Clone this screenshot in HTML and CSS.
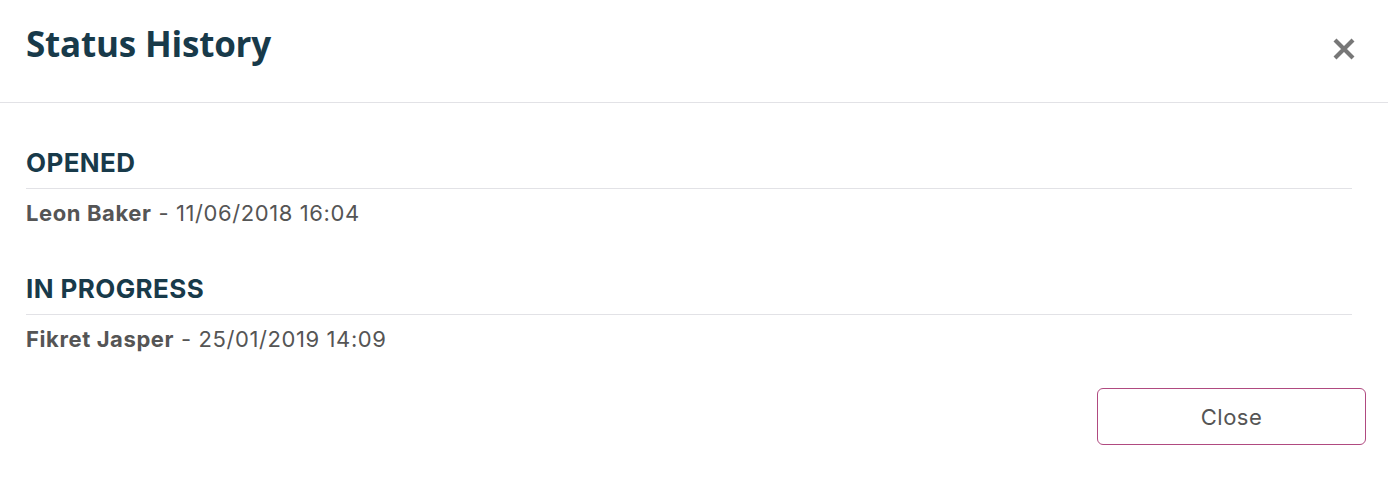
FILE: index.html
```html
<!DOCTYPE html>
<html lang="en">
<head>
<meta charset="utf-8">
<title>Status History</title>
<link rel="stylesheet" href="styles.css">
</head>
<body>
<div class="modal">
  <header class="modal-header">
    <h1 class="modal-title">Status History</h1>
    <button class="icon-close" aria-label="Close">
      <svg width="22" height="22" viewBox="0 0 22 22"><path d="M2 2 L20 20 M20 2 L2 20" stroke="#777777" stroke-width="4.2" stroke-linecap="butt"/></svg>
    </button>
  </header>
  <div class="modal-body">
    <section class="status">
      <h2 class="status-name">OPENED</h2>
      <p class="status-meta"><strong>Leon Baker</strong> - 11/06/2018 16:04</p>
    </section>
    <section class="status">
      <h2 class="status-name">IN PROGRESS</h2>
      <p class="status-meta"><strong>Fikret Jasper</strong> - 25/01/2019 14:09</p>
    </section>
  </div>
  <footer class="modal-footer">
    <button class="btn-close">Close</button>
  </footer>
</div>
</body>
</html>
```
FILE: styles.css
```css
html, body {
  margin: 0;
  padding: 0;
  background: #ffffff;
}
body {
  font-family: Inter, "Liberation Sans", sans-serif;
  width: 1388px;
  height: 492px;
  overflow: hidden;
}
.modal {
  display: flex;
  flex-direction: column;
}
.modal-header {
  height: 103px;
  box-sizing: border-box;
  border-bottom: 1px solid #e2e2e6;
  display: flex;
  align-items: flex-start;
  justify-content: space-between;
  padding: 20px 33px 0 26px;
}
.modal-title {
  margin: 0;
  font-family: "Open Sans", sans-serif;
  font-weight: 700;
  font-size: 35px;
  line-height: 48px;
  color: #183a4a;
  letter-spacing: -0.2px;
}
.icon-close {
  border: 0;
  background: none;
  padding: 0;
  margin-top: 18px;
  width: 22px;
  height: 22px;
  display: flex;
}
.modal-body {
  display: flex;
  flex-direction: column;
  gap: 48px;
  padding: 45px 36px 0 26px;
}
.status-name {
  margin: 0;
  font-size: 26px;
  font-weight: 700;
  color: #183a4a;
  line-height: 30px;
  padding-bottom: 10px;
  border-bottom: 1px solid #e2e2e6;
  letter-spacing: 0.4px;
}
.status-meta {
  margin: 11px 0 0;
  font-size: 22px;
  line-height: 26px;
  color: #555555;
  letter-spacing: 0.6px;
}
.status-meta strong {
  font-weight: 700;
}
.modal-footer {
  display: flex;
  justify-content: flex-end;
  padding: 36px 22px 0 0;
}
.btn-close {
  width: 269px;
  height: 57px;
  border: 1px solid #b04a80;
  border-radius: 6px;
  background: #fff;
  font-family: Inter, "Liberation Sans", sans-serif;
  font-size: 22px;
  letter-spacing: 0.5px;
  color: #555555;
}
```
